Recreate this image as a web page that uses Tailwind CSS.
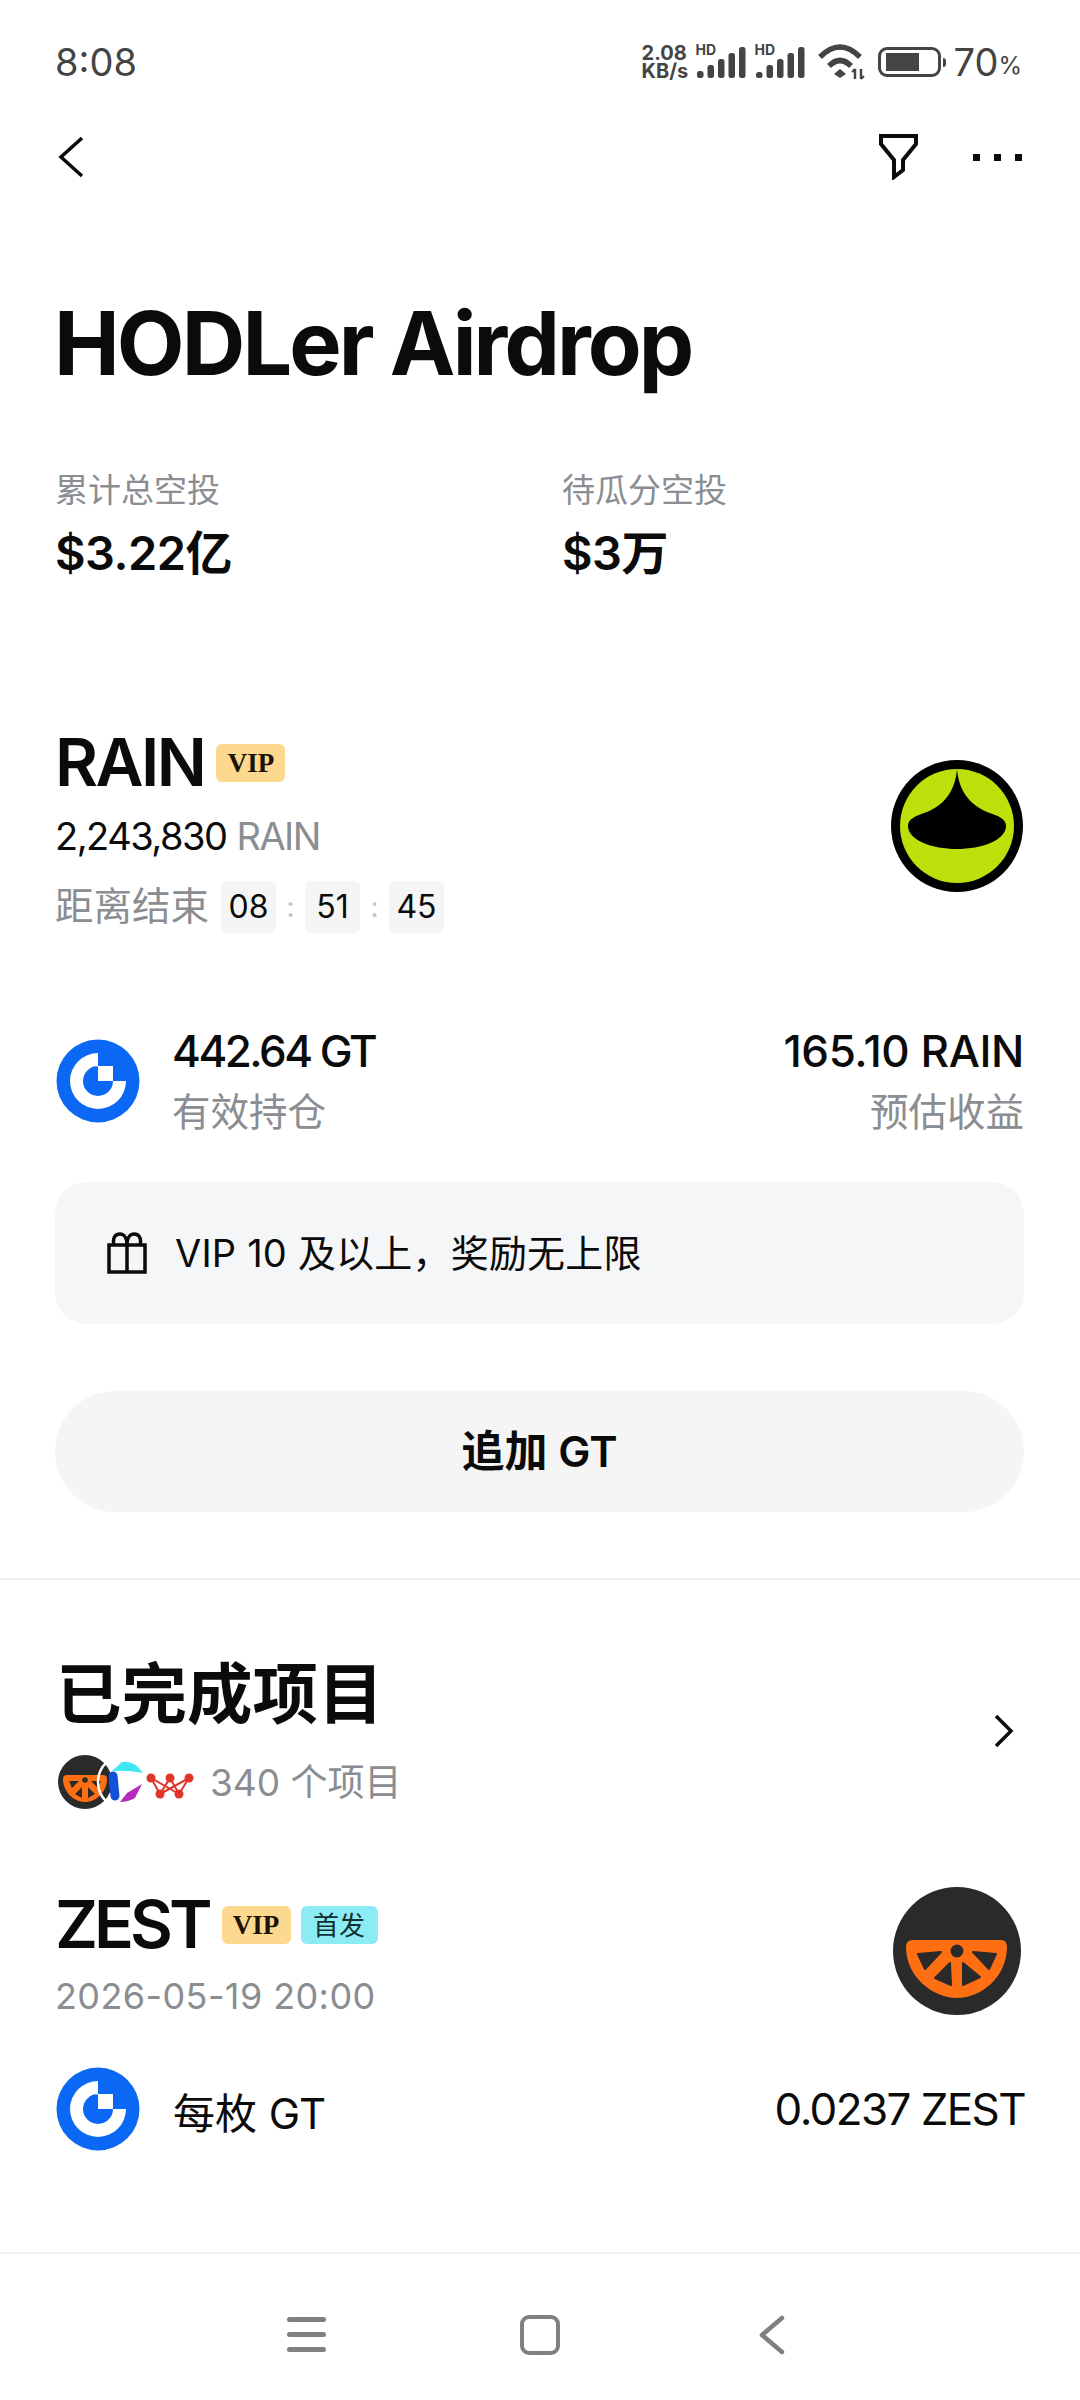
<!DOCTYPE html>
<html lang="zh-CN">
<head>
    <meta charset="UTF-8">
    <meta name="viewport" content="width=device-width, initial-scale=1.0">
    <title>HODLer Airdrop</title>
    <script src="https://cdn.jsdelivr.net/npm/@tailwindcss/browser@4"></script>
</head>
<body class="bg-white">
<div class="w-[1080px] h-[2400px] flex flex-col font-['Inter','Noto_Sans_CJK_SC',sans-serif] text-[#0b0b0b] overflow-hidden">

    <!-- status bar -->
    <div class="h-[124px] shrink-0 pl-[55px] pr-[58px] flex items-center justify-between text-[#444]">
        <span class="text-[38px]">8:08</span>
        <div class="flex items-center">
            <div class="flex flex-col font-bold text-[20px] leading-[18px] w-[55px]">
                <span>2.08</span>
                <span>KB/s</span>
            </div>
            <div class="relative w-[50px] h-[34px]">
                <span class="absolute left-[-1px] top-[-2px] text-[14px] leading-[14px] font-bold">HD</span>
                <svg width="50" height="34" viewBox="0 0 50 34" fill="#444"><rect x="0" y="26" width="6.5" height="7" rx="2.5"/><rect x="10.5" y="20" width="6.5" height="13" rx="2.5"/><rect x="21" y="14" width="6.5" height="19" rx="2.5"/><rect x="31.5" y="8" width="6.5" height="25" rx="2.5"/><rect x="42" y="2" width="6.5" height="31" rx="2.5"/></svg>
            </div>
            <div class="relative w-[50px] h-[34px] ml-[9px]">
                <span class="absolute left-[-1px] top-[-2px] text-[14px] leading-[14px] font-bold">HD</span>
                <svg width="50" height="34" viewBox="0 0 50 34" fill="#444"><rect x="0" y="27" width="6.5" height="6" rx="2.5"/><rect x="10.5" y="20" width="6.5" height="13" rx="2.5"/><rect x="21" y="14" width="6.5" height="19" rx="2.5"/><rect x="31.5" y="8" width="6.5" height="25" rx="2.5"/><rect x="42" y="2" width="6.5" height="31" rx="2.5"/></svg>
            </div>
            <svg class="ml-[11px]" width="50" height="36" viewBox="0 0 50 36" fill="none" stroke="#444">
                <path d="M3 13Q23 -7 43 13" stroke-width="5.5"/>
                <path d="M12 22Q23 11 34 22" stroke-width="5.5"/>
                <path d="M23 25L29 30L23 34L17 30Z" fill="#444" stroke="none"/>
                <path d="M38 25V35M44 25V35" stroke-width="2.5"/>
                <path d="M35 28L38 25M47 32L44 35" stroke-width="2"/>
            </svg>
            <div class="ml-[11px] w-[63px] h-[30px] border-[3px] border-[#444] rounded-[9px] pl-[5px] py-[3px]">
                <div class="w-[33px] h-full bg-[#444]"></div>
            </div>
            <div class="w-[3px] h-[9px] ml-[2px] bg-[#444] rounded-r-sm"></div>
            <span class="ml-[8px] text-[38px] leading-[38px]">70</span>
            <span class="text-[24px] leading-[24px] mt-[8px]">%</span>
        </div>
    </div>

    <!-- nav -->
    <div class="h-[66px] shrink-0 pl-[57px] pr-[58px] flex items-center justify-between">
        <svg width="28" height="44" viewBox="0 0 28 44" fill="none" stroke="#0b0b0b" stroke-width="3.5"><path d="M25 3L4 22L25 41"/></svg>
        <div class="flex items-center">
            <svg class="mt-[-2px]" width="42" height="48" viewBox="0 0 42 48" fill="none" stroke="#0b0b0b" stroke-width="4"><path d="M3 4H38V12L25 28V38L16 45V28L3 12Z"/></svg>
            <div class="flex gap-[14px] ml-[53px]">
                <div class="w-[7px] h-[7px] bg-[#0b0b0b]"></div>
                <div class="w-[7px] h-[7px] bg-[#0b0b0b]"></div>
                <div class="w-[7px] h-[7px] bg-[#0b0b0b]"></div>
            </div>
        </div>
    </div>

    <!-- title -->
    <h1 class="h-[130px] mt-[88px] shrink-0 pl-[54px] flex items-center text-[88px] font-bold tracking-[-2.9px]">HODLer Airdrop</h1>

    <!-- totals -->
    <div class="mt-[58px] shrink-0 pl-[55px] pr-[56px] grid grid-cols-[507px_1fr]">
        <div>
            <div class="h-[50px] flex items-center text-[33px] text-[#8a8d91]">累计总空投</div>
            <div class="h-[60px] mt-[7px] flex items-center text-[47px] font-semibold tracking-[-0.5px]">$3.22亿</div>
        </div>
        <div>
            <div class="h-[50px] flex items-center text-[33px] text-[#8a8d91]">待瓜分空投</div>
            <div class="h-[60px] mt-[7px] flex items-center text-[47px] font-semibold tracking-[-0.5px]">$3万</div>
        </div>
    </div>

    <!-- RAIN -->
    <div class="mt-[144px] shrink-0 pl-[55px] pr-[56px] flex justify-between">
        <div>
            <div class="h-[70px] flex items-center">
                <span class="text-[66px] font-semibold tracking-[-2.5px]">RAIN</span>
                <span class="ml-[12px] mt-[2px] w-[69px] h-[38px] rounded-[6px] bg-[#fdd88f] flex items-center justify-center font-['Liberation_Serif',serif] font-bold text-[27px] text-[#1c1408]">VIP</span>
            </div>
            <div class="h-[50px] mt-[14px] flex items-center text-[38px] tracking-[-1.5px]">2,243,830<span class="ml-[10px] text-[#8a8d91]">RAIN</span></div>
            <div class="h-[52px] mt-[20px] flex items-center">
                <span class="text-[38.5px] text-[#8a8d91] w-[166px]">距离结束</span>
                <span class="w-[55px] h-[52px] rounded-[6px] bg-[#f5f5f5] flex items-center justify-center text-[32px]">08</span>
                <span class="w-[29px] text-center text-[28px] text-[#c4c4c4]">:</span>
                <span class="w-[55px] h-[52px] rounded-[6px] bg-[#f5f5f5] flex items-center justify-center text-[32px]">51</span>
                <span class="w-[29px] text-center text-[28px] text-[#c4c4c4]">:</span>
                <span class="w-[55px] h-[52px] rounded-[6px] bg-[#f5f5f5] flex items-center justify-center text-[32px]">45</span>
            </div>
        </div>
        <svg class="mt-[33px] mr-[1px]" width="132" height="132" viewBox="-66 -66 132 132">
            <circle r="66" fill="#000"/>
            <circle r="57" fill="#bfdf0a"/>
            <path d="M0 -57C2 -35 12 -22 30 -14C42 -10 49 -7 49 0C49 14 25 23 0 23C-25 23 -49 14 -49 0C-49 -7 -42 -10 -30 -14C-12 -22 -2 -35 0 -57Z" fill="#000"/>
        </svg>
    </div>

    <!-- holding row -->
    <div class="mt-[90px] h-[115px] shrink-0 pl-[56px] pr-[56px] flex items-center justify-between">
        <div class="flex items-center">
            <svg width="84" height="84" viewBox="-42 -42 84 84">
                <circle r="41.5" fill="#0a68f4"/>
                <path d="M0 -28A28 28 0 1 0 28 0H15A15 15 0 1 1 0 -15H15V0H0Z" fill="#fff"/>
            </svg>
            <div class="ml-[32px]">
                <div class="h-[56px] flex items-center text-[44px] font-medium tracking-[-2.5px]">442.64 GT</div>
                <div class="h-[50px] mt-[9px] flex items-center text-[38.5px] text-[#8a8d91]">有效持仓</div>
            </div>
        </div>
        <div class="flex flex-col items-end">
            <div class="h-[56px] flex items-center text-[44px] font-medium tracking-[-0.4px]">165.10 RAIN</div>
            <div class="h-[50px] mt-[9px] flex items-center text-[38.5px] text-[#8a8d91]">预估收益</div>
        </div>
    </div>

    <!-- vip note -->
    <div class="mt-[44px] ml-[55px] mr-[56px] h-[142px] shrink-0 rounded-[32px] bg-[#f5f6f8] flex items-center pl-[51px]">
        <svg width="42" height="42" viewBox="0 0 42 42" fill="none" stroke="#0b0b0b" stroke-width="3.5"><path d="M3 13H39V40H3ZM21 13V40M8 13C6 5 10 2 14 2C18 2 21 6 21 13C21 6 24 2 28 2C32 2 36 5 34 13"/></svg>
        <span class="ml-[27px] text-[38px] tracking-[0.2px]">VIP 10 及以上，奖励无上限</span>
    </div>

    <!-- add button -->
    <button class="mt-[67px] ml-[55px] mr-[56px] h-[121px] shrink-0 rounded-full bg-[#f5f5f5] text-[43px] font-semibold">追加 GT</button>

    <div class="mt-[66px] h-[2px] shrink-0 bg-[#eff0f2]"></div>

    <!-- finished -->
    <div class="mt-[75px] shrink-0 pl-[56px] pr-[64px] flex items-center justify-between">
        <div>
            <div class="h-[80px] flex items-center text-[65.5px] font-semibold">已完成项目</div>
            <div class="h-[56px] mt-[19px] flex items-center">
                <svg class="ml-[2px]" width="140" height="56" viewBox="0 0 140 56">
                    <circle cx="27" cy="28" r="27" fill="#2a2a2a"/>
                    <path d="M5 25Q5 21 9 21H45Q49 21 49 25C49 38 38 48 27 48C16 48 5 38 5 25Z" fill="#fd6f12"/>
                    <circle cx="27" cy="26" r="2.8" fill="#2a2a2a"/>
                    <path d="M11 27H21L14 34ZM24 33V44L17 40ZM30 33V44L37 40ZM33 27H43L40 34Z" fill="#2a2a2a"/>
                    <circle cx="67" cy="28" r="27" fill="none" stroke="#fff" stroke-width="2.5"/>
                    <path d="M54 17L64 8Q76 6 85 19Q70 16 54 17Z" fill="#3ee8f2"/>
                    <path d="M55 22L57 42" stroke="#1252d8" stroke-width="9" stroke-linecap="round"/>
                    <path d="M62 48L69 39L84 30L77 44Q70 48 62 48Z" fill="#b52bc0"/>
                    <path d="M93 24L102 40L112 24L121 40L131 24M93 24L121 40M131 24L102 40" fill="none" stroke="#e0352b" stroke-width="2"/>
                    <g fill="#e0352b"><circle cx="93" cy="24" r="4.5"/><circle cx="112" cy="24" r="4.5"/><circle cx="131" cy="24" r="4.5"/><circle cx="102" cy="40" r="4.5"/><circle cx="121" cy="40" r="4.5"/></g>
                </svg>
                <span class="ml-[12px] mt-[2px] text-[37px] text-[#8a8d91]">340 个项目</span>
            </div>
        </div>
        <svg class="mb-[3px]" width="24" height="36" viewBox="0 0 24 36" fill="none" stroke="#0b0b0b" stroke-width="3.5"><path d="M4 3L19 18L4 33"/></svg>
    </div>

    <!-- ZEST -->
    <div class="mt-[79px] shrink-0 pl-[55px] pr-[56px] flex items-center justify-between">
        <div>
            <div class="h-[70px] flex items-center">
                <span class="text-[66px] font-semibold tracking-[-4px]">ZEST</span>
                <span class="ml-[13px] mt-[2px] w-[69px] h-[38px] rounded-[6px] bg-[#fdd88f] flex items-center justify-center font-['Liberation_Serif',serif] font-bold text-[27px] text-[#1c1408]">VIP</span>
                <span class="ml-[10px] mt-[2px] w-[77px] h-[38px] rounded-[6px] bg-[#8cecf5] flex items-center justify-center text-[26px] text-[#10302f]">首发</span>
            </div>
            <div class="h-[50px] mt-[12px] flex items-center text-[36px] tracking-[0.4px] text-[#8a8d91]">2026-05-19 20:00</div>
        </div>
        <svg class="-mt-[8px] mr-[3px]" width="128" height="128" viewBox="-64 -64 128 128">
            <circle r="64" fill="#2a2a2a"/>
            <path d="M-51 -4Q-51 -11 -44 -11H44Q50 -11 50 -4C50 25 25 47 0 47C-25 47 -51 25 -51 -4Z" fill="#fd6f12"/>
            <circle r="6.5" fill="#2a2a2a"/>
            <path d="M-39 3L-16 1L-32 18ZM-7 12L-6 34L-22 27ZM6 12L6 34L23 26ZM16 1L39 3L32 18Z" fill="#2a2a2a" stroke="#2a2a2a" stroke-width="2" stroke-linejoin="round"/>
        </svg>
    </div>

    <!-- per GT -->
    <div class="mt-[46px] shrink-0 pl-[56px] pr-[55px] flex items-center justify-between">
        <div class="flex items-center">
            <svg width="84" height="84" viewBox="-42 -42 84 84">
                <circle r="41.5" fill="#0a68f4"/>
                <path d="M0 -28A28 28 0 1 0 28 0H15A15 15 0 1 1 0 -15H15V0H0Z" fill="#fff"/>
            </svg>
            <span class="ml-[33px] text-[42px] mt-[8px]">每枚 GT</span>
        </div>
        <span class="text-[44px] tracking-[-1.6px]">0.0237 ZEST</span>
    </div>

    <!-- android nav -->
    <div class="mt-auto h-[148px] shrink-0 border-t-2 border-[#f2f3f4] flex items-start pt-[63px] pl-[287px]">
        <div class="w-[39px] flex flex-col gap-[10px]">
            <div class="h-[5px] rounded-full bg-[#808080]"></div>
            <div class="h-[5px] rounded-full bg-[#808080]"></div>
            <div class="h-[5px] rounded-full bg-[#808080]"></div>
        </div>
        <div class="ml-[194px] -mt-[2px] w-[40px] h-[40px] rounded-[9px] border-[4px] border-[#808080]"></div>
        <svg class="ml-[199px] -mt-[2px]" width="26" height="40" viewBox="0 0 26 40" fill="none" stroke="#808080" stroke-width="4.5" stroke-linecap="round" stroke-linejoin="round"><path d="M23 3L3 20L23 37"/></svg>
    </div>
</div>
</body>
</html>
